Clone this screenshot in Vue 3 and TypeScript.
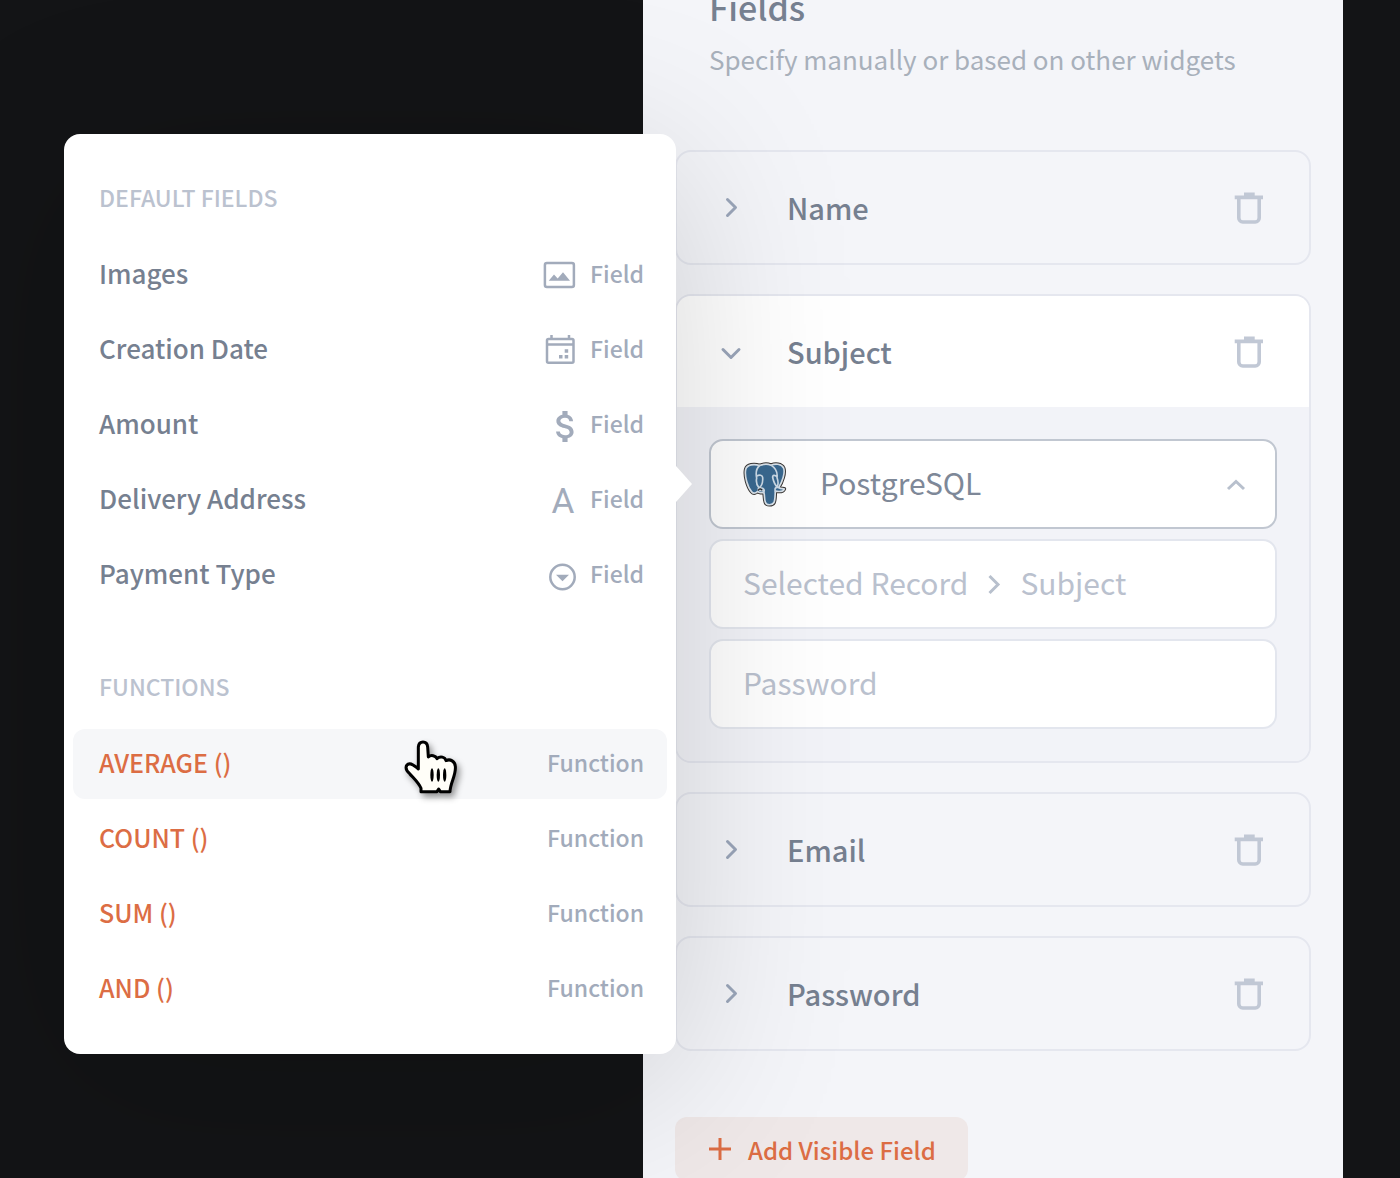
<script setup lang="ts">
import { ref } from 'vue'

type IconName = 'image' | 'calendar' | 'dollar' | 'letter' | 'dropdown'

interface DefaultField {
  label: string
  icon: IconName
}

interface FieldCard {
  name: string
  open: boolean
}

const defaultFields: DefaultField[] = [
  { label: 'Images', icon: 'image' },
  { label: 'Creation Date', icon: 'calendar' },
  { label: 'Amount', icon: 'dollar' },
  { label: 'Delivery Address', icon: 'letter' },
  { label: 'Payment Type', icon: 'dropdown' },
]

const functions: string[] = ['AVERAGE ()', 'COUNT ()', 'SUM ()', 'AND ()']
const activeFunction = ref('AVERAGE ()')

const cards = ref<FieldCard[]>([
  { name: 'Name', open: false },
  { name: 'Subject', open: true },
  { name: 'Email', open: false },
  { name: 'Password', open: false },
])

const source = ref('PostgreSQL')
const password = ref('')
</script>

<template>
  <div class="stage">
    <main class="panel">
      <h1 class="title">Fields</h1>
      <p class="subtitle">Specify manually or based on other widgets</p>

      <div class="cards">
        <section v-for="card in cards" :key="card.name" class="card">
          <header class="card-head" :class="{ open: card.open }">
            <button class="toggle" type="button" :aria-expanded="card.open" @click="card.open = !card.open">
              <svg class="chevron" viewBox="0 0 24 24" aria-hidden="true">
                <path v-if="card.open" d="M4 9.500l8 8 8-8" />
                <path v-else d="M8.500 3.500l8 8-8 8" />
              </svg>
              <span>{{ card.name }}</span>
            </button>
            <button class="trash" type="button" :aria-label="`Delete ${card.name}`">
              <svg viewBox="0 0 32 32" aria-hidden="true">
                <path d="M11 0.500h10.700v3H30v3.800H1.700V3.500H11z" fill="currentColor" />
                <path d="M5.800 6v20a4 4 0 0 0 4 4h12.400a4 4 0 0 0 4-4V6" fill="none" stroke="currentColor" stroke-width="3.600" />
              </svg>
            </button>
          </header>

          <div v-if="card.open" class="card-body">
            <div class="box box-active">
              <svg class="elephant" viewBox="0 0 132 134" aria-hidden="true">
                <g stroke-linejoin="round" stroke-linecap="round">
                  <path
                    d="M8 22C12 6 34 5 50 10C60 6 74 5 84 9C96 4 116 4 122 18C127 32 118 60 107 76C114 81 121 78 124 80C121 88 108 89 97 87C96 99 97 112 93 121C88 130 70 130 67 120C63 110 66 98 62 90C57 93 48 92 44 87C40 92 32 96 26 89C14 75 4 42 8 22Z"
                    fill="#39688f"
                    stroke="#3b3836"
                    stroke-width="11"
                  />
                  <path
                    d="M8 22C12 6 34 5 50 10C60 6 74 5 84 9C96 4 116 4 122 18C127 32 118 60 107 76C114 81 121 78 124 80C121 88 108 89 97 87C96 99 97 112 93 121C88 130 70 130 67 120C63 110 66 98 62 90C57 93 48 92 44 87C40 92 32 96 26 89C14 75 4 42 8 22Z"
                    fill="#39688f"
                    stroke="#d9e2ea"
                    stroke-width="5"
                  />
                  <path
                    d="M50 10C38 20 39 38 41 48C38 62 42 70 48 77C43 82 46 86 62 85M41 42C50 36 58 39 59 46C60 58 60 66 50 76M84 9C98 18 104 32 102 46C106 58 108 66 102 74M102 44C96 38 88 38 89 46C92 60 96 68 103 75M62 90C66 84 62 76 52 78M97 87C95 80 96 74 106 76"
                    fill="none"
                    stroke="#cbd9e5"
                    stroke-width="5"
                  />
                  <path d="M46 84C50 78 54 80 56 83" fill="none" stroke="#2f2d2d" stroke-width="4" />
                </g>
              </svg>
              <select v-model="source" class="source" aria-label="Data source">
                <option>PostgreSQL</option>
              </select>
              <svg class="caret" viewBox="0 0 24 24" aria-hidden="true">
                <path d="M4 17l8-7.500 8 7.500" />
              </svg>
            </div>
            <button class="box path" type="button">
              <span>Selected Record</span>
              <svg class="separator" viewBox="0 0 16 24" aria-hidden="true">
                <path d="M3.500 4l8.500 8.500-8.500 8.500" />
              </svg>
              <span>Subject</span>
            </button>
            <input v-model="password" class="box entry" type="text" placeholder="Password" aria-label="Password" />
          </div>
        </section>
      </div>

      <button class="add" type="button">
        <svg viewBox="0 0 22 22" aria-hidden="true">
          <path d="M11 0v22M0 11h22" stroke="currentColor" stroke-width="3" />
        </svg>
        Add Visible Field
      </button>

      <aside class="popover">
        <h2 class="group">DEFAULT FIELDS</h2>
        <div class="rows">
          <button v-for="field in defaultFields" :key="field.label" class="row" type="button">
            <span class="label">{{ field.label }}</span>
            <svg class="icon" viewBox="0 0 34 34" aria-hidden="true">
              <g v-if="field.icon === 'image'">
                <rect x="1.900" y="4.900" width="29" height="24" rx="2" class="line" />
                <path d="M5.700 22.700L11 16.500l3.700 4L20 14.300l7 8.400z" />
              </g>
              <g v-else-if="field.icon === 'calendar'">
                <rect x="4" y="6" width="26.500" height="23.800" rx="1.500" class="line" />
                <path d="M4 11.500h26.500M8.500 2v4M26 2v4" class="line" />
                <path d="M21.700 16.200h3.500v3.500h-3.500zM16 22h3.500v3.500H16zM21.700 22h3.500v3.500h-3.500z" />
              </g>
              <path
                v-else-if="field.icon === 'dollar'"
                transform="translate(2.200 -2.200) scale(1.720)"
                d="M11.800 10.900c-2.270-.59-3-1.200-3-2.150 0-1.090 1.010-1.850 2.700-1.850 1.780 0 2.440.85 2.500 2.100h2.210c-.07-1.720-1.120-3.300-3.210-3.810V3h-3v2.160c-1.940.42-3.500 1.680-3.500 3.610 0 2.310 1.910 3.460 4.700 4.130 2.500.6 3 1.480 3 2.410 0 .69-.49 1.790-2.700 1.790-2.060 0-2.870-.92-2.980-2.100h-2.200c.12 2.190 1.760 3.420 3.680 3.830V21h3v-2.150c1.950-.37 3.500-1.500 3.500-3.550 0-2.840-2.430-3.810-4.700-4.400z"
              />
              <text v-else-if="field.icon === 'letter'" x="20" y="30" text-anchor="middle" class="glyph">A</text>
              <g v-else>
                <circle cx="19.500" cy="19" r="12.200" class="line" />
                <path d="M13 16.800h13l-6.500 6.400z" />
              </g>
            </svg>
            <span class="kind">Field</span>
          </button>
        </div>

        <h2 class="group second">FUNCTIONS</h2>
        <div class="rows">
          <button
            v-for="fn in functions"
            :key="fn"
            class="row"
            :class="{ active: fn === activeFunction }"
            type="button"
            @mouseenter="activeFunction = fn"
          >
            <span class="label fn">{{ fn }}</span>
            <span class="kind">Function</span>
          </button>
        </div>

        <svg class="pointer" viewBox="0 0 180 180" aria-hidden="true">
          <path
            d="M54 158V148C48 132 30 116 20 104C5 92 6 76 20 74C32 75 40 86 46 90V24C48 4 72 4 74 24L76 54C84 46 98 50 102 59C112 50 126 54 129 65C142 58 156 68 157 82C160 108 142 130 141 158H112L107 150L102 158Z"
            fill="#fffef8"
            stroke="#000"
            stroke-width="9"
            stroke-linejoin="round"
          />
          <g fill="#000">
            <ellipse cx="87" cy="108" rx="5" ry="20" />
            <ellipse cx="106" cy="108" rx="5" ry="20" />
            <ellipse cx="125" cy="108" rx="5" ry="20" />
          </g>
        </svg>
      </aside>
    </main>
  </div>
</template>

<style>
body {
  margin: 0;
  background: #131416;
}
</style>

<style scoped>
.stage {
  box-sizing: border-box;
  display: flex;
  justify-content: flex-end;
  height: 100vh;
  padding-right: 57px;
  overflow: hidden;
  background: #131416;
  font-family: 'Noto Sans CJK SC', 'Noto Sans', sans-serif;
  color: #768090;
}

.stage * {
  box-sizing: border-box;
}

button,
input,
select {
  margin: 0;
  padding: 0;
  border: 0;
  background: none;
  color: inherit;
  font: inherit;
  text-align: left;
  cursor: pointer;
}

.panel {
  position: relative;
  width: 50vw;
  min-height: 100%;
  padding: 0 32px;
  background: #f4f5f9;
}

.title {
  margin: 0;
  padding-left: 34px;
  font-size: 34px;
  font-weight: 500;
  line-height: 14px;
}

.subtitle {
  margin: 25px 0 0;
  padding-left: 34px;
  color: #a8b0bb;
  font-size: 26px;
  line-height: 40px;
  white-space: nowrap;
}

.cards {
  display: flex;
  flex-direction: column;
  gap: 29px;
  margin-top: 71px;
}

.card {
  border: 2px solid #e5e7ef;
  border-radius: 16px;
  overflow: hidden;
}

.card-head {
  display: flex;
  align-items: center;
  height: 111px;
  padding: 0 44px 0 42px;
}

.card-head.open {
  background: #fff;
}

.toggle {
  display: flex;
  flex: 1;
  align-items: center;
  gap: 44px;
  font-size: 29px;
  font-weight: 500;
  line-height: 40px;
}

.toggle span {
  padding-bottom: 2px;
}

.chevron {
  width: 24px;
  height: 24px;
  fill: none;
  stroke: #9ba6ba;
  stroke-width: 3;
  stroke-linecap: round;
  stroke-linejoin: round;
}

.trash {
  width: 32px;
  height: 32px;
  color: #c1c8d5;
}

.trash svg {
  display: block;
  width: 32px;
  height: 32px;
}

.card-body {
  display: flex;
  flex-direction: column;
  gap: 10px;
  padding: 32px;
  background: #f2f3f8;
}

.box {
  display: flex;
  align-items: center;
  width: 100%;
  height: 90px;
  padding: 0 32px;
  border: 2px solid #e3e6ee;
  border-radius: 14px;
  background: #fff;
  color: #bac1ce;
  font-size: 30px;
  line-height: 40px;
}

.box::placeholder {
  color: #bac1ce;
  opacity: 1;
}

.box-active {
  padding-right: 27px;
  border-color: #c1c7d1;
  color: #7e8898;
}

.elephant {
  width: 44px;
  height: 45px;
  margin-right: 33px;
}

.source {
  flex: 1;
  appearance: none;
}

.source,
.path span,
.entry {
  padding-bottom: 5px;
}

.caret,
.separator {
  width: 24px;
  height: 24px;
  fill: none;
  stroke: #b8c0cd;
  stroke-width: 3;
}

.separator {
  width: 16px;
}

.path {
  gap: 18px;
}

.add {
  display: flex;
  align-items: center;
  gap: 17px;
  height: 64px;
  margin-top: 66px;
  padding: 0 32px 0 34px;
  border-radius: 12px;
  background: #efe8e8;
  color: #dc6d44;
  font-size: 24px;
  font-weight: 500;
  white-space: nowrap;
}

.add svg {
  width: 22px;
  height: 22px;
}

.popover {
  position: absolute;
  top: 134px;
  right: calc(100% - 33px);
  width: 612px;
  padding: 48px 9px 30px;
  border-radius: 16px;
  background: #fff;
  box-shadow: 0 30px 180px rgba(0, 0, 0, 0.17);
}

.popover::after {
  content: '';
  position: absolute;
  top: 332px;
  left: 100%;
  border: 18px solid transparent;
  border-right-width: 0;
  border-left: 16px solid #fff;
}

.group {
  margin: 0 0 28px;
  padding-left: 26px;
  color: #bbc2cf;
  font-size: 23px;
  font-weight: 500;
  line-height: 30px;
}

.second {
  margin-top: 61px;
}

.rows {
  display: flex;
  flex-direction: column;
  gap: 5px;
}

.row {
  display: flex;
  align-items: center;
  height: 70px;
  padding: 0 23px 0 26px;
  border-radius: 12px;
}

.row.active {
  background: #f6f7f9;
}

.label {
  flex: 1;
  padding-bottom: 5px;
  font-size: 26px;
  font-weight: 500;
}

.fn {
  color: #dc6d44;
  font-size: 25px;
}

.icon {
  width: 34px;
  height: 34px;
  overflow: visible;
  fill: #a2abbb;
}

.line {
  fill: none;
  stroke: #a2abbb;
  stroke-width: 2.500;
}

.glyph {
  font-family: Roboto, sans-serif;
  font-size: 35px;
}

.kind {
  min-width: 67px;
  padding-bottom: 5px;
  color: #a2abbb;
  font-size: 23px;
  font-weight: 500;
  text-align: right;
}

.pointer {
  position: absolute;
  top: 605px;
  left: 339px;
  width: 60px;
  height: 60px;
  overflow: visible;
  filter: drop-shadow(3px 4px 3px rgba(0, 0, 0, 0.4));
  pointer-events: none;
}
</style>
